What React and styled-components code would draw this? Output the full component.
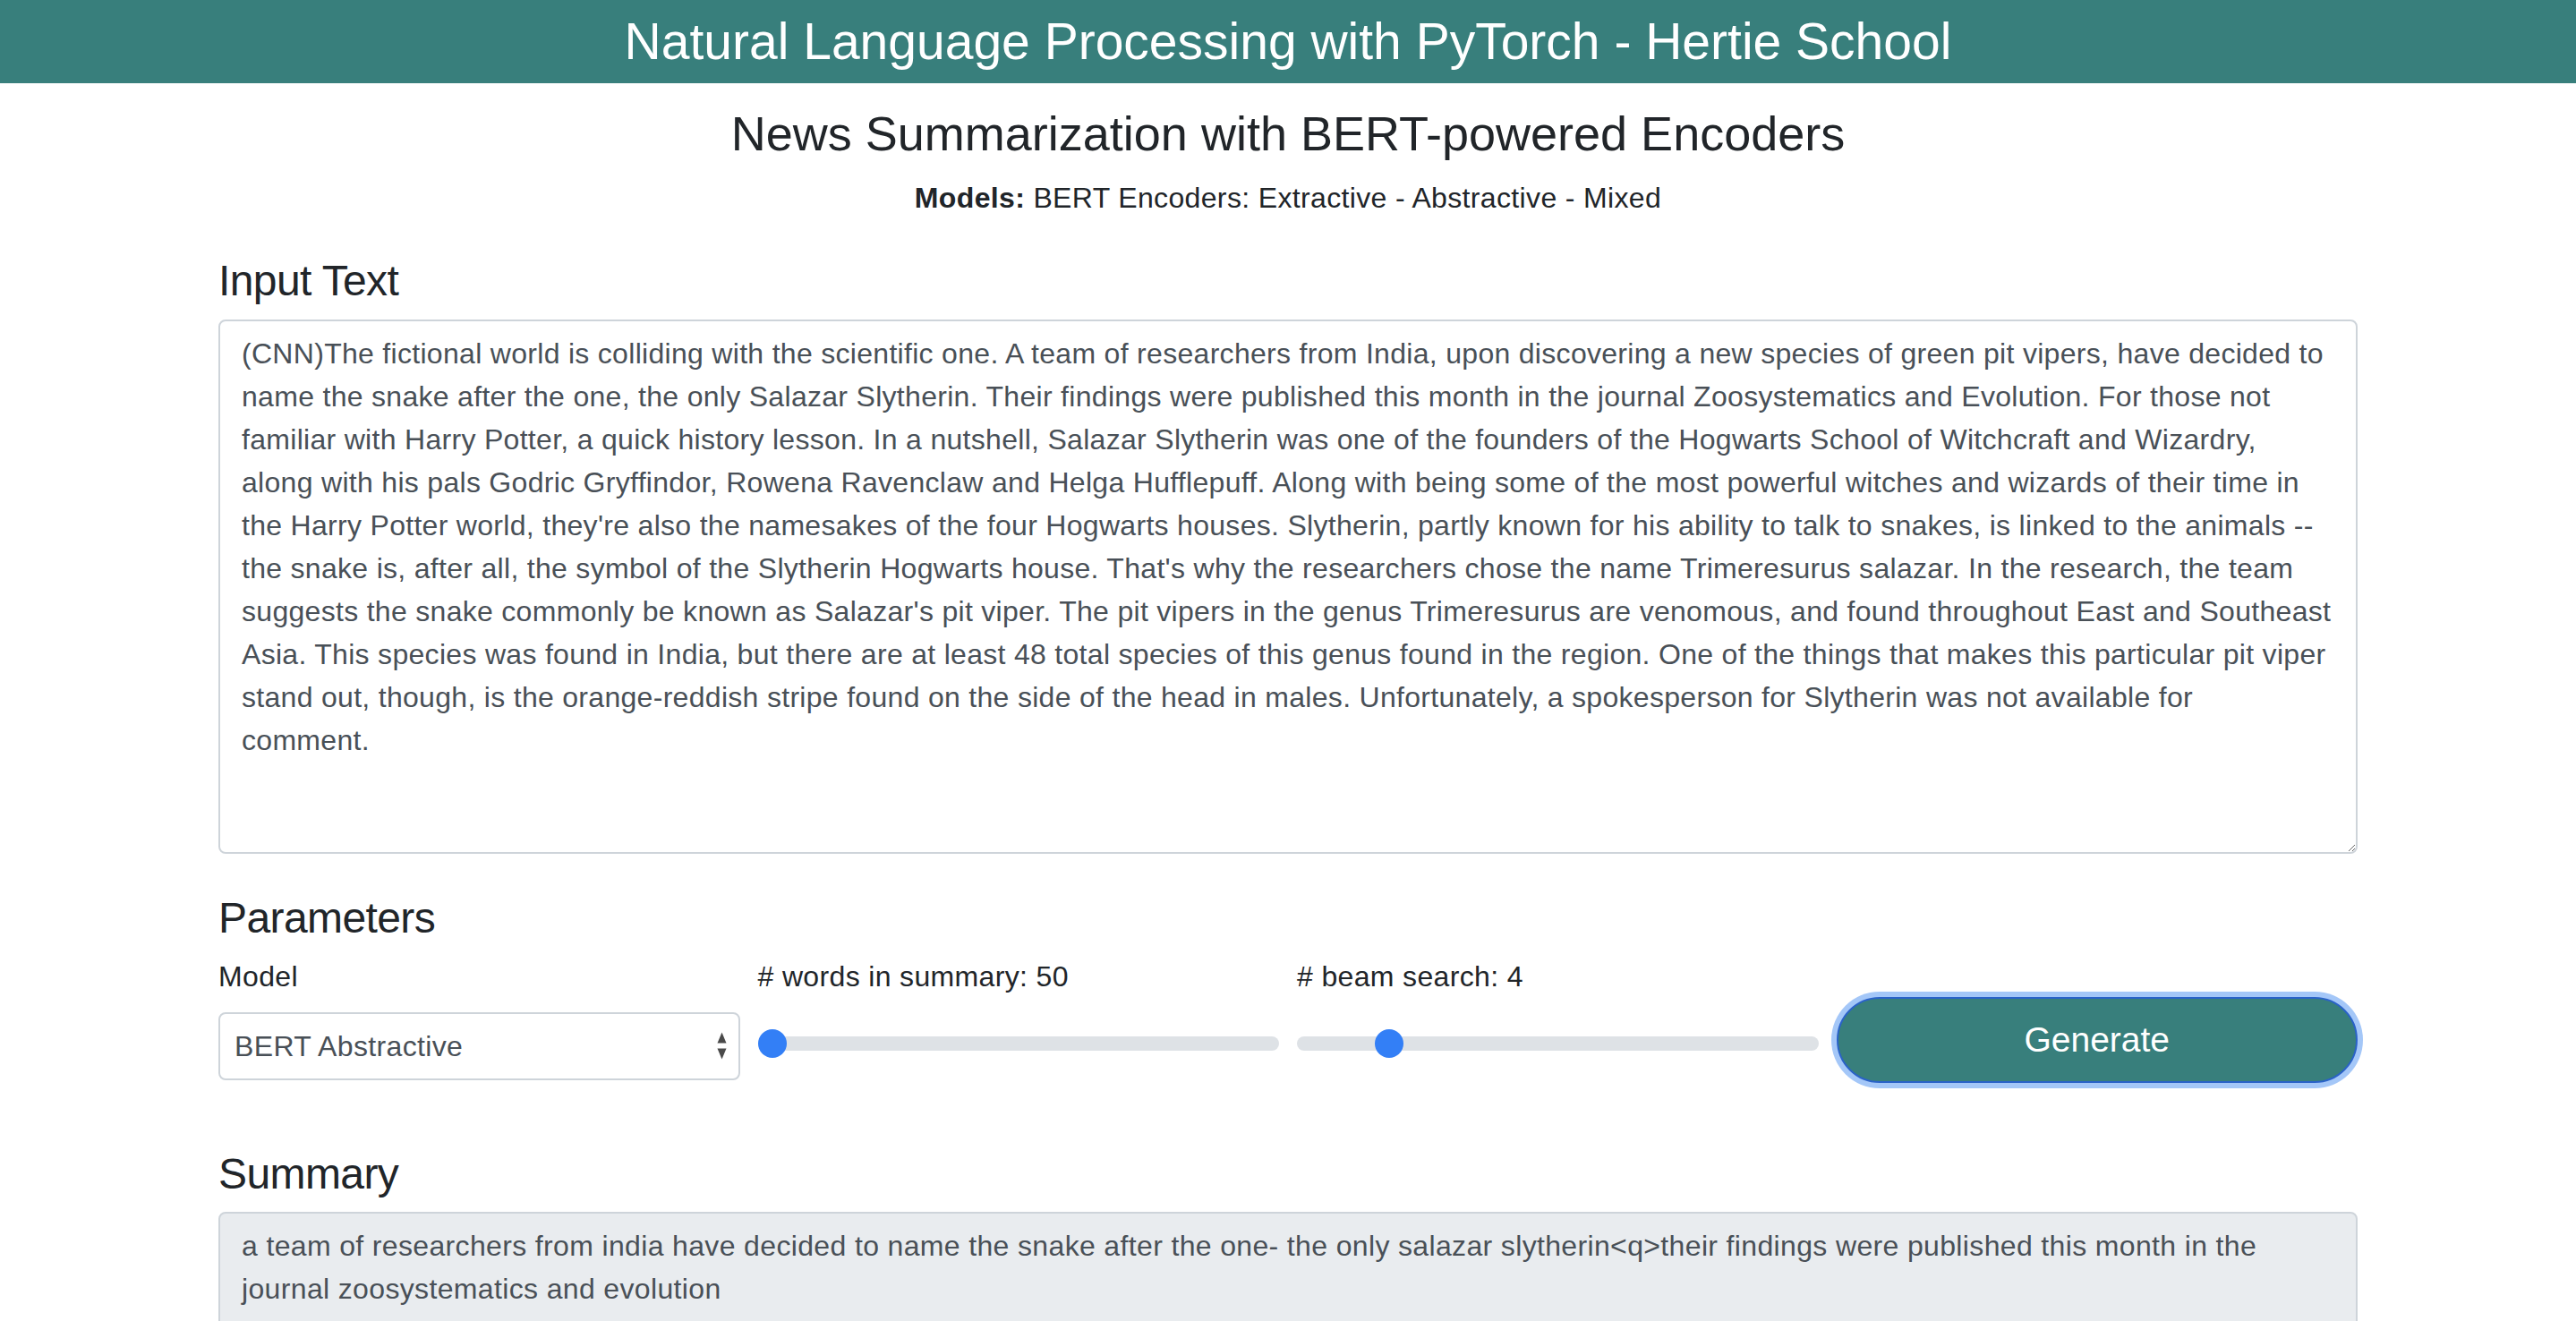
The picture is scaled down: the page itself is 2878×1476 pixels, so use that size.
import React, { useState } from 'react'
import styled, { createGlobalStyle } from 'styled-components'

const article = `(CNN)The fictional world is colliding with the scientific one. A team of researchers from India, upon discovering a new species of green pit vipers, have decided to name the snake after the one, the only Salazar Slytherin. Their findings were published this month in the journal Zoosystematics and Evolution. For those not familiar with Harry Potter, a quick history lesson. In a nutshell, Salazar Slytherin was one of the founders of the Hogwarts School of Witchcraft and Wizardry, along with his pals Godric Gryffindor, Rowena Ravenclaw and Helga Hufflepuff. Along with being some of the most powerful witches and wizards of their time in the Harry Potter world, they're also the namesakes of the four Hogwarts houses. Slytherin, partly known for his ability to talk to snakes, is linked to the animals -- the snake is, after all, the symbol of the Slytherin Hogwarts house. That's why the researchers chose the name Trimeresurus salazar. In the research, the team suggests the snake commonly be known as Salazar's pit viper. The pit vipers in the genus Trimeresurus are venomous, and found throughout East and Southeast Asia. This species was found in India, but there are at least 48 total species of this genus found in the region. One of the things that makes this particular pit viper stand out, though, is the orange-reddish stripe found on the side of the head in males. Unfortunately, a spokesperson for Slytherin was not available for
comment.`

const summary =
  'a team of researchers from india have decided to name the snake after the one- the only salazar slytherin<q>their findings were published this month in the journal zoosystematics and evolution'

const GlobalStyle = createGlobalStyle`
  body {
    margin: 0;
    background: #fff;
    color: #212529;
    font-family: "Liberation Sans", Arial, sans-serif;
    font-size: 32px;
    line-height: 1.5;
    letter-spacing: 0.35px;
  }
`

const App = () => {
  const [words, setWords] = useState(50)
  const [beams, setBeams] = useState(4)

  return (
    <>
      <GlobalStyle />
      <Header>Natural Language Processing with PyTorch - Hertie School</Header>
      <Container>
        <Title>News Summarization with BERT-powered Encoders</Title>
        <Subtitle>
          <b>Models:</b> BERT Encoders: Extractive - Abstractive - Mixed
        </Subtitle>

        <SectionTitle top={40}>Input Text</SectionTitle>
        <InputArea defaultValue={article} />

        <SectionTitle top={43}>Parameters</SectionTitle>
        <ParamsRow>
          <Field>
            <Label>Model</Label>
            <SelectWrap>
              <Select defaultValue='abs'>
                <option value='ext'>BERT Extractive</option>
                <option value='abs'>BERT Abstractive</option>
                <option value='mix'>BERT Mixed</option>
              </Select>
              <SelectArrows width='11' height='32' viewBox='0 0 11 32'>
                <path d='M5.5 0.5 L10.5 12.5 L0.5 12.5 Z' fill='#4a4a4a' />
                <path d='M0.5 18.5 L10.5 18.5 L5.5 30.5 Z' fill='#4a4a4a' />
              </SelectArrows>
            </SelectWrap>
          </Field>
          <Field>
            <Label># words in summary: {words}</Label>
            <SliderWrap>
              <Range
                type='range'
                min={50}
                max={300}
                value={words}
                onChange={(e) => setWords(e.target.value)}
              />
            </SliderWrap>
          </Field>
          <Field>
            <Label># beam search: {beams}</Label>
            <SliderWrap>
              <Range
                type='range'
                min={1}
                max={20}
                value={beams}
                onChange={(e) => setBeams(e.target.value)}
              />
            </SliderWrap>
          </Field>
          <Field>
            <GenerateButton>Generate</GenerateButton>
          </Field>
        </ParamsRow>

        <SectionTitle top={76} bottom={13}>Summary</SectionTitle>
        <SummaryBox>{summary}</SummaryBox>
      </Container>
    </>
  )
}

const Header = styled.header`
  height: 93px;
  background: #387f7c;
  color: #fff;
  font-size: 57px;
  line-height: 93px;
  letter-spacing: 0;
  text-align: center;
  white-space: nowrap;
`

const Container = styled.main`
  width: 2390px;
  margin: 0 auto;
`

const Title = styled.h2`
  margin: 24px 0 15px;
  font-size: 54px;
  font-weight: 400;
  line-height: 1.2;
  letter-spacing: 0;
  text-align: center;
`

const Subtitle = styled.p`
  margin: 0;
  text-align: center;
  line-height: 48px;
  b {
    font-weight: 700;
  }
`

const SectionTitle = styled.h4`
  margin: ${(p) => p.top}px 0 ${(p) => p.bottom ?? 15}px;
  font-size: 48px;
  font-weight: 400;
  line-height: 1.2;
  letter-spacing: -0.6px;
`

const InputArea = styled.textarea`
  display: block;
  box-sizing: border-box;
  width: 100%;
  height: 597px;
  padding: 12px 24px;
  border: 2px solid #ced4da;
  border-radius: 8px;
  color: #495057;
  font-family: inherit;
  font-size: 32px;
  line-height: 48px;
  letter-spacing: 0.3px;
  outline: none;
`

const ParamsRow = styled.div`
  display: grid;
  grid-template-columns: repeat(4, 1fr);
  column-gap: 20px;
  align-items: end;
  margin-top: -3px;
`

const Field = styled.div`
  display: flex;
  flex-direction: column;
`

const Label = styled.label`
  display: block;
  margin-bottom: 16px;
  line-height: 48px;
`

const SelectWrap = styled.div`
  position: relative;
`

const Select = styled.select`
  box-sizing: border-box;
  width: 100%;
  height: 76px;
  padding: 0 40px 0 16px;
  border: 2px solid #ced4da;
  border-radius: 8px;
  background: #fff;
  color: #495057;
  font-family: inherit;
  font-size: 32px;
  letter-spacing: 0.35px;
  appearance: none;
  -webkit-appearance: none;
  outline: none;
`

const SelectArrows = styled.svg`
  position: absolute;
  right: 15px;
  top: 22px;
  pointer-events: none;
`

const SliderWrap = styled.div`
  display: flex;
  align-items: center;
  height: 76px;
  padding-bottom: 6px;
  box-sizing: border-box;
`

const Range = styled.input`
  width: 100%;
  height: 32px;
  margin: 0;
  background: transparent;
  -webkit-appearance: none;
  appearance: none;
  &::-webkit-slider-runnable-track {
    height: 16px;
    border-radius: 16px;
    background: #dee2e6;
  }
  &::-webkit-slider-thumb {
    -webkit-appearance: none;
    width: 32px;
    height: 32px;
    margin-top: -8px;
    border: none;
    border-radius: 50%;
    background: #337ff6;
  }
  &:focus {
    outline: none;
  }
`

const GenerateButton = styled.button`
  box-sizing: border-box;
  width: 100%;
  height: 96px;
  margin-bottom: -3px;
  border: 2px solid #2a62c8;
  border-radius: 48px;
  background: #387f7c;
  box-shadow: 0 0 0 6px #a4c7f8;
  color: #fff;
  font-family: inherit;
  font-size: 39px;
  letter-spacing: 0;
  cursor: pointer;
`

const SummaryBox = styled.div`
  box-sizing: border-box;
  height: 220px;
  padding: 12px 24px;
  border: 2px solid #ced4da;
  border-radius: 8px;
  background: #e9ecef;
  color: #495057;
  line-height: 48px;
`

export default App
